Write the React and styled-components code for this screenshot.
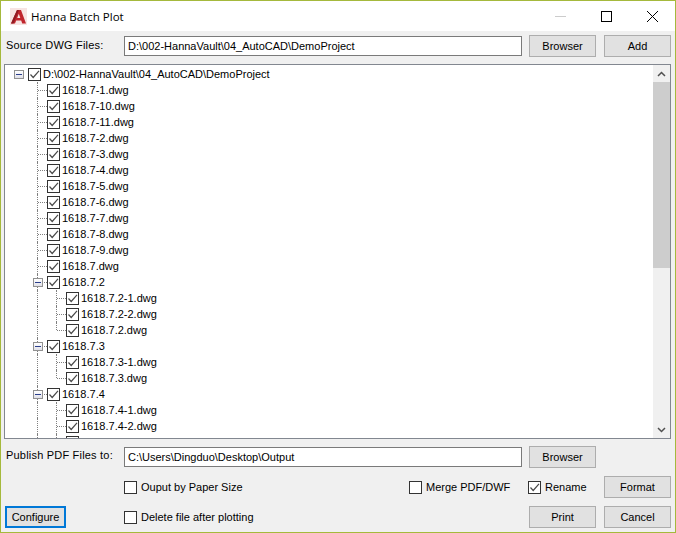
import React from 'react'
import styled, { createGlobalStyle } from 'styled-components'

const Global = createGlobalStyle`
  html, body { margin: 0; padding: 0; background: #f0f0f0; }
  * { box-sizing: border-box; }
`

const Window = styled.div`
  width: 676px;
  height: 533px;
  display: flex;
  flex-direction: column;
  border: 1px solid #a5b93c;
  background: #f0f0f0;
  font-family: "Liberation Sans", Arial, sans-serif;
  font-size: 11px;
  color: #000;
  overflow: hidden;
`

const TitleBar = styled.div`
  height: 30px;
  flex: none;
  display: flex;
  align-items: center;
  background: #fff;
  padding-left: 9px;
`

const AppTitle = styled.span`
  margin-left: 4px;
  font-family: "Open Sans", sans-serif;
  font-size: 11.5px;
  flex: 1;
`

const WinButton = styled.div`
  width: 46px;
  height: 30px;
  display: flex;
  align-items: center;
  justify-content: center;
`

const Body = styled.div`
  flex: 1;
  display: flex;
  flex-direction: column;
  padding: 4px 4px 0 3px;
`

const PathRow = styled.div`
  display: flex;
  align-items: center;
  gap: 7px;
  height: 22px;
`

const FieldLabel = styled.label`
  width: 113px;
  padding-left: 2px;
  margin-top: ${(p) => p.$up || 0}px;
  letter-spacing: 0.2px;
  white-space: nowrap;
  flex: none;
`

const PathInput = styled.div`
  width: 398px;
  height: 20px;
  flex: none;
  border: 1px solid #7a7a7a;
  background: #fff;
  padding-left: 3px;
  line-height: 18px;
`

const Button = styled.button`
  width: ${(p) => p.$w || 67}px;
  height: 22px;
  margin-left: ${(p) => p.$ml || 0}px;
  padding: 0;
  border: ${(p) => (p.$focus ? '2px solid #0078d7' : '1px solid #adadad')};
  background: #e1e1e1;
  font: inherit;
  color: #000;
  grid-column: ${(p) => p.$col || 'auto'};
`

const TreePanel = styled.div`
  height: 375px;
  margin: 7px 0;
  flex: none;
  display: flex;
  border: 1px solid #828790;
  background: #fff;
`

const TreeList = styled.div`
  flex: 1;
  overflow: hidden;
  padding: 1px 0 0 4px;
`

const Row = styled.div`
  height: 16px;
  display: flex;
  align-items: center;
`

const Guide = styled.div`
  width: 19px;
  height: 16px;
  flex: none;
  position: relative;
  &::before {
    content: '';
    display: ${(p) => (p.$v ? 'block' : 'none')};
    position: absolute;
    left: 9px;
    top: 0;
    height: ${(p) => (p.$v === 'elbow' ? '8px' : '16px')};
    border-left: 1px dotted #808080;
  }
  &::after {
    content: '';
    display: ${(p) => (p.$h ? 'block' : 'none')};
    position: absolute;
    left: 10px;
    top: 8px;
    width: 9px;
    border-top: 1px dotted #808080;
  }
`

const Expander = styled.div`
  position: absolute;
  left: 5px;
  top: 4px;
  width: 10px;
  height: 9px;
  border: 1px solid #919191;
  background: linear-gradient(#fff, #e0e0e8);
  z-index: 1;
  &::after {
    content: '';
    position: absolute;
    left: 1px;
    top: 3px;
    width: 6px;
    height: 1px;
    background: #2b3f8c;
  }
`

const Check = styled.span`
  width: 13px;
  height: 13px;
  flex: none;
  display: block;
  background: #fff;
  border: 1px solid #333;
`

const TreeLabel = styled.span`
  margin-left: 2px;
  white-space: nowrap;
`

const ScrollBar = styled.div`
  width: 17px;
  flex: none;
  display: flex;
  flex-direction: column;
  background: #f0f0f0;
`

const ScrollArrow = styled.div`
  height: 17px;
  flex: none;
  display: flex;
  align-items: center;
  justify-content: center;
`

const ScrollThumb = styled.div`
  height: 186px;
  flex: none;
  background: #cdcdcd;
`

const ScrollTrack = styled.div`
  flex: 1;
`

const Options = styled.div`
  display: grid;
  grid-template-columns: 120px 285px 119px 76px 67px;
  grid-auto-rows: 22px;
  row-gap: 8px;
  margin-top: 8px;
  align-items: center;
`

const CheckOption = styled.label`
  display: flex;
  align-items: center;
  gap: 4px;
  grid-column: ${(p) => p.$col};
  white-space: nowrap;
`

const OptionCheck = styled.span`
  width: 13px;
  height: 13px;
  flex: none;
  display: block;
  border: 1px solid #333;
  background: #fff;
`

const Tick = () => (
  <svg width="13" height="13" viewBox="0 0 13 13" style={{ display: 'block', margin: -1 }}>
    <path d="M2.5 6.5 L5.2 9.5 L11 2.8" fill="none" stroke="#4a4a4a" strokeWidth="1.2" />
  </svg>
)

const Logo = () => (
  <svg width="17" height="17" viewBox="0 0 17 17">
    <rect width="17" height="17" fill="#f7e4e2" />
    <path d="M1 15.5 L7 2 H11 L16 15.5 H12.2 L11.2 12.6 H6.2 L5 15.5 Z M7.2 10 H10.3 L8.8 5.8 Z" fill="#c0252d" fillRule="evenodd" />
    <path d="M7 2 H9 L3.5 15.5 H1 Z" fill="#8f1a22" />
  </svg>
)

const tree = [
  { level: 1, label: '1618.7-1.dwg' },
  { level: 1, label: '1618.7-10.dwg' },
  { level: 1, label: '1618.7-11.dwg' },
  { level: 1, label: '1618.7-2.dwg' },
  { level: 1, label: '1618.7-3.dwg' },
  { level: 1, label: '1618.7-4.dwg' },
  { level: 1, label: '1618.7-5.dwg' },
  { level: 1, label: '1618.7-6.dwg' },
  { level: 1, label: '1618.7-7.dwg' },
  { level: 1, label: '1618.7-8.dwg' },
  { level: 1, label: '1618.7-9.dwg' },
  { level: 1, label: '1618.7.dwg' },
  { level: 1, label: '1618.7.2', open: true },
  { level: 2, label: '1618.7.2-1.dwg' },
  { level: 2, label: '1618.7.2-2.dwg' },
  { level: 2, label: '1618.7.2.dwg', last: true },
  { level: 1, label: '1618.7.3', open: true },
  { level: 2, label: '1618.7.3-1.dwg' },
  { level: 2, label: '1618.7.3.dwg', last: true },
  { level: 1, label: '1618.7.4', open: true },
  { level: 2, label: '1618.7.4-1.dwg' },
  { level: 2, label: '1618.7.4-2.dwg' },
  { level: 2, label: '' },
]

const TreeRow = ({ item }) => (
  <Row>
    <Guide />
    {item.level === 2 && <Guide $v="through" />}
    <Guide $v={item.last ? 'elbow' : 'through'} $h>
      {item.open && <Expander />}
    </Guide>
    <Check><Tick /></Check>
    <TreeLabel>{item.label}</TreeLabel>
  </Row>
)

export default function App() {
  return (
    <>
      <Global />
      <Window>
        <TitleBar>
          <Logo />
          <AppTitle>Hanna Batch Plot</AppTitle>
          <WinButton>
            <svg width="11" height="11" viewBox="0 0 11 11"><path d="M0 5.5H11" stroke="#ccc" /></svg>
          </WinButton>
          <WinButton>
            <svg width="11" height="11" viewBox="0 0 11 11"><rect x="0.5" y="0.5" width="10" height="10" fill="none" stroke="#000" /></svg>
          </WinButton>
          <WinButton>
            <svg width="11" height="11" viewBox="0 0 11 11"><path d="M0 0L11 11M11 0L0 11" stroke="#000" /></svg>
          </WinButton>
        </TitleBar>
        <Body>
          <PathRow>
            <FieldLabel $up={-2}>Source DWG Files:</FieldLabel>
            <PathInput>D:\002-HannaVault\04_AutoCAD\DemoProject</PathInput>
            <Button>Browser</Button>
            <Button $ml={1}>Add</Button>
          </PathRow>
          <TreePanel>
            <TreeList>
              <Row>
                <Guide><Expander /></Guide>
                <Check><Tick /></Check>
                <TreeLabel>D:\002-HannaVault\04_AutoCAD\DemoProject</TreeLabel>
              </Row>
              {tree.map((item, i) => <TreeRow key={i} item={item} />)}
            </TreeList>
            <ScrollBar>
              <ScrollArrow>
                <svg width="9" height="6" viewBox="0 0 9 6"><path d="M1 5L4.5 1.5L8 5" fill="none" stroke="#505050" strokeWidth="1.5" /></svg>
              </ScrollArrow>
              <ScrollThumb />
              <ScrollTrack />
              <ScrollArrow>
                <svg width="9" height="6" viewBox="0 0 9 6"><path d="M1 1L4.5 4.5L8 1" fill="none" stroke="#505050" strokeWidth="1.5" /></svg>
              </ScrollArrow>
            </ScrollBar>
          </TreePanel>
          <PathRow>
            <FieldLabel $up={-4}>Publish PDF Files to:</FieldLabel>
            <PathInput>C:\Users\Dingduo\Desktop\Output</PathInput>
            <Button>Browser</Button>
          </PathRow>
          <Options>
            <CheckOption $col={2}><OptionCheck />Ouput by Paper Size</CheckOption>
            <CheckOption $col={3}><OptionCheck />Merge PDF/DWF</CheckOption>
            <CheckOption $col={4}><OptionCheck><Tick /></OptionCheck>Rename</CheckOption>
            <Button $col={5}>Format</Button>
            <Button $focus $w={61} $ml={1}>Configure</Button>
            <CheckOption $col={2}><OptionCheck />Delete file after plotting</CheckOption>
            <Button $col={4} $ml={1}>Print</Button>
            <Button $col={5}>Cancel</Button>
          </Options>
        </Body>
      </Window>
    </>
  )
}
